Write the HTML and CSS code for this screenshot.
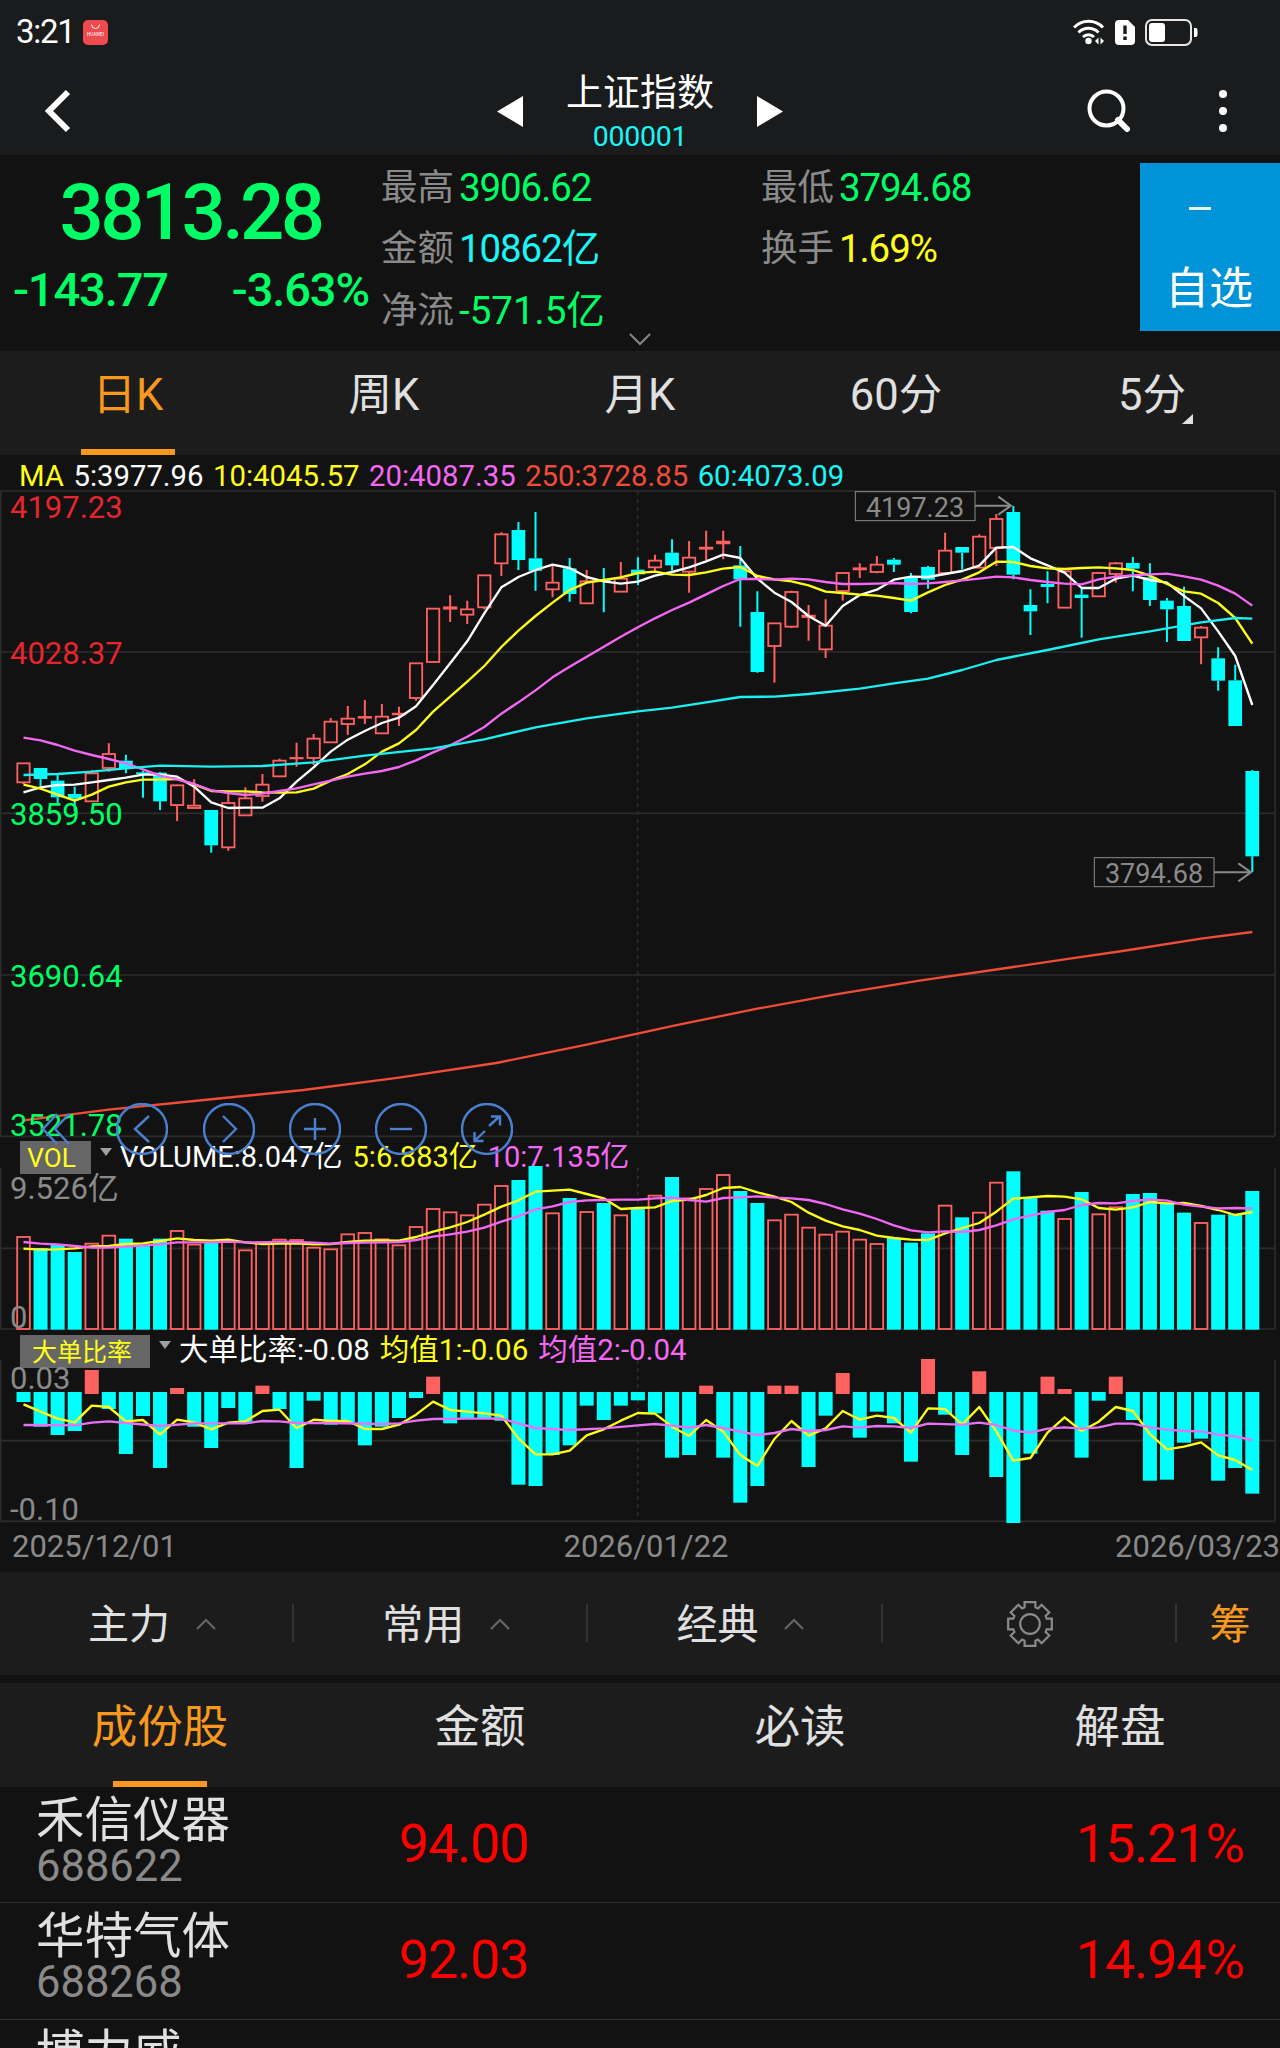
FILE: index.html
```html
<!DOCTYPE html>
<html lang="zh-CN">
<head>
    <meta charset="UTF-8">
    <meta name="viewport" content="width=device-width, initial-scale=1.0">
    <title>上证指数 000001</title>
    <link rel="stylesheet" href="styles.css">
</head>
<body>
    <div class="app">
        <div class="status-bar">
            <span class="clock">3:21</span>
            <svg class="store-icon" width="25" height="25" viewBox="0 0 25 25">
                <rect width="25" height="25" rx="5" fill="#ef4a50"/>
                <path d="M8.5 4.500a4 4 0 0 0 8 0" fill="none" stroke="#fff" stroke-width="1"/>
                <text x="12.500" y="16" font-size="4.600" text-anchor="middle" fill="#fff">HUAWEI</text>
            </svg>
            <div class="status-icons">
                <svg width="32" height="26" viewBox="0 0 32 26" fill="none" stroke="#fff" stroke-width="3">
                    <path d="M1 8.500a20 20 0 0 1 29 0M5.500 13.500a14 14 0 0 1 20 0M10 18a8 8 0 0 1 11 0"/>
                    <circle cx="15.500" cy="22" r="3.200" fill="#fff" stroke="none"/>
                    <path d="M25.500 18.500v7l-3.500-3.500zM27.500 18.500v7l3.500-3.500z" fill="#fff" stroke="none"/>
                </svg>
                <svg width="20" height="25" viewBox="0 0 20 25">
                    <path d="M4 0h9l7 7v14a4 4 0 0 1-4 4H4a4 4 0 0 1-4-4V4a4 4 0 0 1 4-4z" fill="#fff"/>
                    <path d="M8.300 5.500h3.400V14H8.300zM8.300 16.500h3.400v3.500H8.300z" fill="#191b1c"/>
                </svg>
                <svg width="53" height="27" viewBox="0 0 53 27">
                    <rect x="1" y="1" width="45" height="25" rx="6" fill="none" stroke="#e6e6e6" stroke-width="2"/>
                    <rect x="4" y="4" width="16" height="19" rx="3" fill="#fff"/>
                    <path d="M49 9h1.500a2 2 0 0 1 2 2v5a2 2 0 0 1-2 2H49z" fill="#fff"/>
                </svg>
            </div>
        </div>

        <div class="header">
            <svg class="back" width="28" height="44" viewBox="0 0 28 44"><path d="M25 3L6 22l19 19" fill="none" stroke="#fff" stroke-width="6"/></svg>
            <div class="title-block">
                <svg width="26" height="31" viewBox="0 0 26 31"><path d="M0 15.500L26 0v31z" fill="#fff"/></svg>
                <div class="title">
                    <div class="title-name">上证指数</div>
                    <div class="title-code">000001</div>
                </div>
                <svg width="26" height="31" viewBox="0 0 26 31"><path d="M26 15.500L0 0v31z" fill="#fff"/></svg>
            </div>
            <div class="header-actions">
                <svg width="44" height="44" viewBox="0 0 44 44" fill="none" stroke="#fff" stroke-width="4">
                    <circle cx="19.500" cy="19.500" r="17"/>
                    <path d="M31 31l9 9" stroke-width="6" stroke-linecap="round"/>
                </svg>
                <svg width="8" height="44" viewBox="0 0 8 44" fill="#fff"><circle cx="4" cy="5" r="4"/><circle cx="4" cy="22" r="4"/><circle cx="4" cy="39" r="4"/></svg>
            </div>
        </div>

        <div class="quote">
            <div class="price-block">
                <div class="price">3813.28</div>
                <div class="change"><span>-143.77</span><span>-3.63%</span></div>
            </div>
            <div class="stats">
                <div class="stat"><label>最高</label><span class="green">3906.62</span></div>
                <div class="stat"><label>最低</label><span class="green">3794.68</span></div>
                <div class="stat"><label>金额</label><span class="cyan">10862亿</span></div>
                <div class="stat"><label>换手</label><span class="yellow">1.69%</span></div>
                <div class="stat"><label>净流</label><span class="green net">-571.5亿</span></div>
            </div>
            <button class="favorite">
                <svg width="22" height="3" viewBox="0 0 22 3"><rect width="22" height="3" fill="#e4f4fc"/></svg>
                <span>自选</span>
            </button>
            <svg class="expand" width="22" height="13" viewBox="0 0 22 13"><path d="M1 1l10 10L21 1" fill="none" stroke="#888" stroke-width="2"/></svg>
        </div>

        <div class="tabs">
            <div class="tab active">日K</div>
            <div class="tab">周K</div>
            <div class="tab">月K</div>
            <div class="tab">60分</div>
            <div class="tab has-more">5分</div>
        </div>

        <div class="chart">
            <div class="legend ma-legend">
                <span class="yellow">MA</span>
                <span class="white">5:3977.96</span>
                <span class="yellow">10:4045.57</span>
                <span class="magenta">20:4087.35</span>
                <span class="orange-red">250:3728.85</span>
                <span class="cyan">60:4073.09</span>
            </div>
            <div class="pane kline">
                <svg id="kline" viewBox="0 33 3840 1938"></svg>
                <div class="axis">
                    <span class="red">4197.23</span>
                    <span class="red">4028.37</span>
                    <span class="green">3859.50</span>
                    <span class="green">3690.64</span>
                    <span class="green">3521.78</span>
                </div>
            </div>
            <div class="legend vol-legend">
                <span class="tag">VOL</span><i class="arrow"></i>
                <span class="white">VOLUME:8.047亿</span>
                <span class="yellow">5:6.883亿</span>
                <span class="magenta">10:7.135亿</span>
            </div>
            <div class="pane volume">
                <svg id="volume" viewBox="0 231 3840 489"></svg>
                <div class="axis"><span>9.526亿</span><span>0</span></div>
            </div>
            <div class="legend ratio-legend">
                <span class="tag">大单比率</span><i class="arrow"></i>
                <span class="white">大单比率:-0.08</span>
                <span class="yellow">均值1:-0.06</span>
                <span class="magenta">均值2:-0.04</span>
            </div>
            <div class="pane ratio">
                <svg id="ratio" viewBox="0 810 3840 486"></svg>
                <div class="axis"><span>0.03</span><span>-0.10</span></div>
            </div>
            <div class="dates"><span>2025/12/01</span><span>2026/01/22</span><span>2026/03/23</span></div>

            <div class="chart-tools">
                <svg width="52" height="52" viewBox="0 0 52 52"><path d="M27 11L13 26l14 15M39 11L25 26l14 15"/></svg>
                <svg width="52" height="52" viewBox="0 0 52 52"><circle cx="26" cy="26" r="25"/><path d="M33 13L19 26l14 13"/></svg>
                <svg width="52" height="52" viewBox="0 0 52 52"><circle cx="26" cy="26" r="25"/><path d="M20 13l13 13-13 13"/></svg>
                <svg width="52" height="52" viewBox="0 0 52 52"><circle cx="26" cy="26" r="25"/><path d="M15 26h22M26 15v22"/></svg>
                <svg width="52" height="52" viewBox="0 0 52 52"><circle cx="26" cy="26" r="25"/><path d="M15 26h22"/></svg>
                <svg width="52" height="52" viewBox="0 0 52 52"><circle cx="26" cy="26" r="25"/><path d="M28 23l11-10M30 13.500h9v9M24 28L13.500 38M13.500 29v9h9"/></svg>
            </div>
        </div>

        <div class="menu">
            <div class="menu-item"><span>主力</span><svg width="20" height="12" viewBox="0 0 20 12"><path d="M1 11l9-9 9 9"/></svg></div>
            <div class="menu-item"><span>常用</span><svg width="20" height="12" viewBox="0 0 20 12"><path d="M1 11l9-9 9 9"/></svg></div>
            <div class="menu-item"><span>经典</span><svg width="20" height="12" viewBox="0 0 20 12"><path d="M1 11l9-9 9 9"/></svg></div>
            <div class="menu-item settings">
                <svg width="48" height="48" viewBox="-24 -24 48 48">
                    <circle r="9.800"/>
                    <path id="gear"/>
                </svg>
            </div>
            <div class="menu-item chips"><span>筹</span></div>
        </div>

        <div class="tabs list-tabs">
            <div class="tab active">成份股</div>
            <div class="tab">金额</div>
            <div class="tab">必读</div>
            <div class="tab">解盘</div>
        </div>

        <div class="stock">
            <div class="stock-id"><div class="stock-name">禾信仪器</div><div class="stock-code">688622</div></div>
            <div class="stock-price">94.00</div>
            <div class="stock-change">15.21%</div>
        </div>
        <div class="stock">
            <div class="stock-id"><div class="stock-name">华特气体</div><div class="stock-code">688268</div></div>
            <div class="stock-price">92.03</div>
            <div class="stock-change">14.94%</div>
        </div>
        <div class="stock">
            <div class="stock-id"><div class="stock-name">博力威</div></div>
        </div>
    </div>
    <script src="chart.js"></script>
</body>
</html>
```
FILE: styles.css
```css
* {
    box-sizing: border-box;
}
body {
    margin: 0;
    background: #121212;
    color: #e0e0e0;
    font-family: Roboto, "Noto Sans CJK SC", sans-serif;
}
.app {
    width: 1280px;
    height: 2048px;
    overflow: hidden;
}
svg {
    display: block;
}
.green { color: #00ff66; }
.red { color: #e6252f; }
.cyan { color: #1cf5f5; }
.yellow { color: #ffff1a; }
.magenta { color: #f567f5; }
.orange-red { color: #f04c38; }
.white { color: #fff; }

/* status bar + header */
.status-bar {
    display: flex;
    align-items: center;
    height: 64px;
    padding: 0 82px 0 16px;
    background: #191b1c;
}
.clock {
    width: 67px;
    font-size: 33px;
    line-height: 40px;
    letter-spacing: -1.300px;
    color: #fff;
}
.status-icons {
    display: flex;
    align-items: center;
    gap: 10px;
    margin-left: auto;
}
.header {
    display: grid;
    grid-template-columns: 1fr 286px 1fr;
    align-items: center;
    height: 91px;
    padding: 0 53px 0 43px;
    background: #191b1c;
}
.title-block {
    display: flex;
    align-items: center;
    justify-content: space-between;
    margin: 0 -5px 0 5px;
}
.title {
    padding-top: 8px;
    text-align: center;
}
.title-name {
    font-size: 37px;
    line-height: 44px;
    color: #fff;
}
.title-code {
    font-size: 28.500px;
    line-height: 42px;
    letter-spacing: -0.300px;
    color: #1cf5f5;
}
.header-actions {
    display: flex;
    align-items: center;
    justify-content: flex-end;
    gap: 88px;
}

/* quote */
.quote {
    position: relative;
    display: grid;
    grid-template-columns: 381px 1fr 140px;
    height: 196px;
}
.price-block {
    color: #00ff66;
    font-weight: 500;
}
.price {
    height: 103px;
    padding-top: 8px;
    text-align: center;
    font-size: 78px;
    line-height: 100px;
    letter-spacing: -3.700px;
}
.change {
    display: flex;
    justify-content: space-between;
    padding: 0 12px 0 13px;
    font-size: 47px;
    line-height: 64px;
    letter-spacing: -1.100px;
}
.stats {
    display: grid;
    grid-template-columns: 380px 1fr;
    grid-auto-rows: 61.500px;
    padding-top: 2px;
}
.stat {
    display: flex;
    align-items: center;
    font-size: 38.500px;
    letter-spacing: -1.100px;
    line-height: 60px;
}
.stat label {
    width: 78px;
    font-size: 36.500px;
    letter-spacing: 0;
    color: #8a8a8a;
}
.stat .net {
    letter-spacing: 0;
}
.favorite {
    display: flex;
    flex-direction: column;
    align-items: center;
    height: 168px;
    margin-top: 8px;
    padding: 44px 20px 0 0;
    border: none;
    background: #0093d7;
    color: #fff;
    font-family: inherit;
    font-size: 44px;
    line-height: 60px;
}
.favorite span {
    margin: 49px -18px 0 0;
}
.expand {
    position: absolute;
    left: 629px;
    bottom: 5px;
}

/* tabs */
.tabs {
    display: flex;
    height: 104px;
    background: #1c1c1c;
}
.tab {
    position: relative;
    flex: 1;
    text-align: center;
    font-size: 43.500px;
    line-height: 89px;
}
.tab.active {
    color: #f8981d;
}
.tab.active::after {
    content: "";
    position: absolute;
    left: 50%;
    bottom: 0;
    width: 94px;
    height: 6px;
    margin-left: -47px;
    background: #f8981d;
}
.tab.has-more::after {
    content: "";
    position: absolute;
    right: 87px;
    bottom: 31px;
    border-left: 11px solid transparent;
    border-bottom: 10px solid #e0e0e0;
}

/* charts */
.chart {
    position: relative;
}
.legend {
    display: flex;
    align-items: center;
    gap: 10px;
    height: 30px;
    font-size: 29px;
    line-height: 30px;
    white-space: nowrap;
}
.ma-legend {
    height: 36px;
    padding-left: 19px;
    padding-top: 5px;
    gap: 9.500px;
    font-size: 29.300px;
}
.vol-legend, .ratio-legend {
    padding-left: 20px;
}
.vol-legend .white, .ratio-legend .white {
    margin-left: -2px;
}
.legend .tag ~ span {
    padding-top: 10px;
}
.ratio-legend {
    font-size: 29.500px;
}
.tag {
    height: 33px;
    width: 71px;
    margin-top: 10px;
    background: #666;
    color: #ffff1a;
    text-align: center;
    font-size: 26px;
    line-height: 35px;
    padding-right: 8px;
}
.ratio-legend .tag {
    width: 130px;
    padding: 0 6px 0 0;
    font-size: 25px;
    margin-top: 12px;
}
.arrow {
    margin-left: -1px;
    border: 6px solid transparent;
    border-top: 8px solid #a0a0a0;
    border-bottom: 0;
}
.pane {
    position: relative;
}
.pane svg {
    width: 1280px;
    overflow: visible;
}
.kline svg, .kline .axis { height: 646px; }
.volume svg, .volume .axis { height: 163px; }
.ratio svg, .ratio .axis { height: 162px; }
/* scale labels sit over the plot */
.axis {
    position: absolute;
    top: 0;
    left: 10px;
    display: flex;
    flex-direction: column;
    justify-content: space-between;
    color: #8a8a8a;
    font-size: 31px;
    line-height: 30px;
}
.kline .axis {
    display: grid;
    grid-template-rows: 81px 161px 162px 162px 80px;
    align-items: center;
}
.kline .axis span {
    margin-top: 2px;
}
.kline .axis span:first-child {
    align-self: start;
}
.kline .axis span:last-child {
    align-self: end;
    margin-bottom: -4px;
}
.volume .axis {
    padding-top: 7px;
    font-size: 31px;
}
.volume .axis span:last-child,
.ratio .axis span:last-child {
    margin-bottom: -3px;
}
.ratio .axis {
    padding-top: 4px;
}
.dates {
    display: flex;
    justify-content: space-between;
    height: 50px;
    padding: 0 0 0 12px;
    color: #8a8a8a;
    font-size: 31px;
    line-height: 49px;
}
.chart-tools {
    position: absolute;
    top: 648px;
    left: 30px;
    display: flex;
    gap: 34.300px;
}
.chart-tools svg {
    fill: none;
    stroke: #4a80d0;
    stroke-width: 2.400;
}

/* indicator menu */
.menu {
    display: flex;
    height: 103px;
    margin-bottom: 8px;
    background: #1c1c1c;
}
.menu-item {
    position: relative;
    display: flex;
    align-items: center;
    justify-content: center;
    gap: 26px;
    width: 294.200px;
    padding-left: 10px;
    font-size: 41px;
}
.menu-item span {
    padding-bottom: 5px;
}
.menu-item svg {
    fill: none;
    stroke: #666;
    stroke-width: 2.200;
}
.menu-item:not(:last-child)::after {
    content: "";
    position: absolute;
    right: 0;
    top: 32px;
    width: 2px;
    height: 38px;
    background: #333;
}
.menu-item.settings {
    padding-left: 0;
}
.menu-item.settings svg {
    stroke: #8a8a8a;
}
.menu-item.chips {
    flex: 1;
    padding-left: 3px;
    color: #f8981d;
}

/* constituents */
.list-tabs .tab {
    font-size: 45.500px;
    line-height: 90px;
}
.stock {
    display: grid;
    grid-template-columns: 400px 1fr 1fr;
    height: 117px;
    padding: 0 36px 0 36px;
    border-bottom: 1px solid #333;
    color: #ff0000;
    font-size: 54px;
    line-height: 114px;
    letter-spacing: -1.200px;
}
.stock-price {
    margin-left: -37px;
}
.stock-change {
    text-align: right;
}
.stock-id {
    letter-spacing: 0;
}
.stock-name {
    height: 63px;
    color: #e0e0e0;
    font-size: 48.500px;
    line-height: 68px;
}
.stock-code {
    color: #8a8a8a;
    font-size: 43.500px;
    line-height: 34px;
}
.list-tabs + .stock {
    height: 116px;
}
```
FILE: chart.js
```js
// type, body top, body bottom, high, low (plot units, 3 per px)
const candles = [
    ['r',850,907,850,912],['c',864,897,864,918],['c',902,952,882,970],['c',942,956,920,995],['r',880,964,870,964],
    ['r',822,864,790,875],['c',842,866,824,880],['c',877,883,872,953],['c',878,964,876,990],['r',916,975,914,1023],
    ['r',977,984,898,986],['c',990,1096,990,1118],['r',969,1102,940,1112],['r',955,1006,922,1006],['r',914,948,882,965],
    ['r',842,889,836,889],['r',834,835,788,860],['r',776,834,762,855],['r',725,787,714,787],['r',716,732,678,765],
    ['r',711,713,660,732],['r',710,760,672,760],['r',701,703,680,738],['r',550,654,548,662],['r',386,546,386,546],
    ['r',382,386,346,426],['r',388,404,362,432],['r',286,382,286,388],['r',163,250,157,288],['c',150,240,126,270],
    ['c',235,272,96,332],['r',308,328,258,352],['c',265,342,234,365],['r',304,370,270,370],['c',300,303,264,397],
    ['r',296,335,246,335],['c',269,283,232,316],['r',242,262,224,276],['c',218,256,178,272],['r',233,275,183,338],
    ['r',203,206,152,240],['r',185,190,152,238],['c',256,298,198,440],['c',396,576,334,578],['r',430,498,430,608],
    ['r',336,440,332,444],['r',407,411,375,482],['r',437,508,358,534],['r',279,333,279,362],['r',265,268,250,294],
    ['r',254,276,228,280],['c',239,254,234,276],['c',294,396,279,400],['c',261,299,258,326],['r',212,279,158,279],
    ['c',201,218,201,268],['r',170,263,163,263],['r',117,204,102,258],['c',96,284,78,298],['c',375,394,328,465],
    ['c',312,321,274,370],['r',274,383,274,383],['c',344,354,325,473],['r',279,349,276,349],['r',250,282,246,308],
    ['c',249,266,231,334],['c',292,360,250,378],['c',362,388,354,486],['c',378,483,320,483],['r',443,472,438,553],
    ['c',535,602,502,632],['c',601,738,554,738],['c',873,1129,870,1176]
];
const ma5 = [937,922,915,914,907,900,893,884,884,890,920,967,984,983,983,955,905,862,815,779,753,729,713,679,615,550,484,400,322,291,270,254,264,291,304,311,305,287,276,262,244,224,234,296,338,366,408,437,378,345,329,299,290,291,282,273,257,203,201,235,256,278,324,324,296,287,300,308,348,385,454,528,675];
const ma10 = [914,926,944,962,944,920,907,899,899,897,913,933,934,934,937,938,937,926,902,882,853,815,790,750,695,650,605,558,501,452,408,368,330,308,300,292,279,275,284,285,277,266,261,288,298,304,316,335,339,344,347,354,362,337,315,299,277,245,246,258,265,267,264,262,265,270,287,312,334,341,369,414,491];
const ma20 = [773,781,795,812,825,837,850,868,887,898,912,931,939,945,941,933,925,913,902,890,881,873,861,841,817,796,770,741,701,667,631,592,560,530,500,470,442,415,390,368,343,318,297,297,299,296,298,306,312,312,311,309,312,310,306,301,296,290,292,300,306,311,313,298,290,286,283,281,289,299,317,341,377];
// sparse lines: [index, y]
const ma60 = [[0,885],[2,882],[4,875],[6,865],[8,857],[11,860],[14,858],[17,847],[20,827],[24,805],[27,778],[30,742],[33,715],[36,694],[38,683],[40,667],[42,651],[44,650],[46,642],[49,626],[51,610],[53,596],[55,570],[57,540],[60,510],[63,478],[66,454],[69,427],[71,414],[72,416]];
const ma250 = [[0,1921],[5,1889],[10,1863],[16.400,1830],[22,1793],[27.700,1749],[33,1694],[38.400,1634],[43,1586],[47.600,1543],[52.500,1502],[57.600,1464],[61,1438],[64.400,1413],[69,1376],[72,1356]];

const volumes = [441,474,462,486,461,437,446,463,446,423,464,456,455,481,457,449,450,473,478,433,429,448,466,411,357,367,376,344,288,270,228,370,324,366,339,376,354,317,261,325,297,255,303,339,391,374,413,434,425,449,462,444,458,430,347,382,368,278,244,324,362,387,306,373,352,312,309,342,368,399,374,372,303];
const vol5 = [476,479,478,475,469,468,462,460,453,445,450,452,449,457,462,461,460,463,462,456,452,451,452,441,425,412,396,374,350,331,305,302,299,312,325,357,354,352,333,329,315,294,291,307,320,336,368,392,409,420,437,444,449,450,430,414,399,365,326,322,318,320,328,354,359,352,336,340,339,348,360,375,366];
const vol10 = [456,461,463,468,473,473,470,467,463,457,457,457,455,457,457,455,456,458,461,459,458,457,456,450,440,433,425,413,395,379,358,349,336,331,330,329,329,325,323,330,335,324,322,319,323,325,330,342,358,371,387,406,421,427,424,426,420,406,388,377,366,360,345,339,340,333,328,332,344,350,355,354,355];

const ratios = [936,1010,1035,1023,840,957,1092,978,1134,894,1010,1074,954,1000,887,957,1134,932,1004,996,1066,1010,984,924,860,1000,985,984,992,1184,1188,1095,1066,947,990,947,931,970,1103,1095,887,1103,1238,1188,887,887,1131,977,849,1043,965,1000,1115,807,974,1095,844,1161,1299,1091,860,897,1103,932,860,990,1172,1169,1058,1046,1172,1134,1211];
const avg1 = [943,965,986,997,947,951,994,990,1034,989,997,1018,998,994,963,959,1015,989,993,993,1017,1017,1004,974,935,960,965,970,977,1045,1093,1093,1082,1036,1018,992,969,971,1010,1038,990,1025,1095,1128,1047,993,1037,1015,963,989,977,984,1028,955,957,1004,951,1024,1112,1104,1028,982,1023,995,951,963,1032,1078,1070,1057,1096,1110,1140];
const avg2 = [[0,1005],[3,1006],[4,998],[5,994],[6,999],[8,1008],[10,1000],[13,1000],[14,993],[15,994],[16,999],[18,999],[21,1002],[22,1000],[23,992],[24,987],[26,986],[28,986],[29,1000],[30,1014],[32,1020],[34,1015],[36,1006],[37,1002],[38,1007],[39,1013],[40,1005],[41,1014],[42,1025],[43,1035],[44,1029],[45,1017],[46,1023],[47,1020],[48,1009],[49,1013],[50,1008],[51,1009],[52,1014],[53,1001],[55,1004],[56,998],[57,1005],[58,1022],[59,1028],[60,1016],[61,1012],[62,1016],[63,1012],[64,1001],[65,1001],[66,1012],[67,1019],[68,1023],[69,1024],[70,1034],[71,1039],[72,1050]];

const RED = '#ff6161';
const CYAN = '#00ffff';
const x = i => 70.5 + i * 51.2;

function line(data, color, width = 7) {
    const pts = data.map((d, i) => Array.isArray(d) ? `${x(d[0])},${d[1]}` : `${x(i)},${d}`);
    return `<polyline points="${pts.join(' ')}" fill="none" stroke="${color}" stroke-width="${width}" stroke-linejoin="round"/>`;
}

function bar(type, cx, top, bottom, w) {
    if (type === 'c') {
        return `<rect x="${cx - w / 2}" y="${top}" width="${w}" height="${bottom - top}" fill="${CYAN}"/>`;
    }
    return `<rect x="${cx - w / 2 + 2}" y="${top}" width="${w - 4}" height="${bottom - top}" fill="none" stroke="${RED}" stroke-width="5.5"/>`;
}

function grid(top, bottom, rows) {
    const h = rows.map(y => `<path d="M0 ${y}H3825"/>`).join('');
    return `<g fill="none" stroke="#2c2c2c" stroke-width="5">${h}<path d="M2 ${top}V${bottom}M3825 ${top}V${bottom}"/>
        <path d="M1913 ${top}V${bottom}" stroke-dasharray="11 13"/></g>`;
}

function callout(left, top, ax, ay, text) {
    return `<g fill="none" stroke="#8a8a8a" stroke-width="4">
        <rect x="${left}" y="${top}" width="359" height="87" stroke-width="3"/>
        <path d="M${left + 359} ${ay}H${ax}M${ax - 38} ${ay - 27}L${ax} ${ay}L${ax - 38} ${ay + 27}" stroke-width="6"/>
        <text x="${left + 179}" y="${top + 75}" font-size="81" text-anchor="middle" fill="#8a8a8a" stroke="none">${text}</text></g>`;
}

// daily candles
document.getElementById('kline').innerHTML = grid(33, 1968, [33, 516, 1000, 1485, 1969])
    + candles.map(([type, top, bottom, high, low], i) => {
        const color = type === 'c' ? CYAN : RED;
        return `<path d="M${x(i)} ${high}V${top}M${x(i)} ${bottom}V${low}" stroke="${color}" stroke-width="6"/>`
            + bar(type, x(i), top, bottom, 41);
    }).join('')
    + line(ma5, '#ffffff') + line(ma10, '#ffff1a') + line(ma20, '#f567f5')
    + line(ma60, '#1cf0f0') + line(ma250, '#f04c38')
    + callout(2566, 35, 3033, 77, '4197.23')
    + callout(3283, 1133, 3753, 1177, '3794.68');

// volume
document.getElementById('volume').innerHTML = grid(233, 717, [475, 717])
    + volumes.map((v, i) => bar(candles[i][0], x(i), v, candles[i][0] === 'c' ? 719 : 717, 42)).join('')
    + line(vol5, '#ffff1a') + line(vol10, '#f567f5');

// big order ratio
document.getElementById('ratio').innerHTML = grid(810, 1294, [1052, 1294])
    + ratios.map((v, i) => v < 906
        ? `<rect x="${x(i) - 21}" y="${v}" width="42" height="${912 - v}" fill="${RED}"/>`
        : bar('c', x(i), 906, v, 42)).join('')
    + line(avg1, '#ffff1a') + line(avg2, '#e872f5');

// gear outline, 8 teeth
let gear = '';
for (let i = 0; i < 8; i++) {
    [[-18, 17.5], [-14, 22.5], [14, 22.5], [18, 17.5]].forEach(([deg, r]) => {
        const a = (i * 45 + deg) * Math.PI / 180;
        gear += `${gear ? 'L' : 'M'}${(r * Math.sin(a)).toFixed(2)} ${(-r * Math.cos(a)).toFixed(2)}`;
    });
}
document.getElementById('gear').setAttribute('d', gear + 'Z');
```
